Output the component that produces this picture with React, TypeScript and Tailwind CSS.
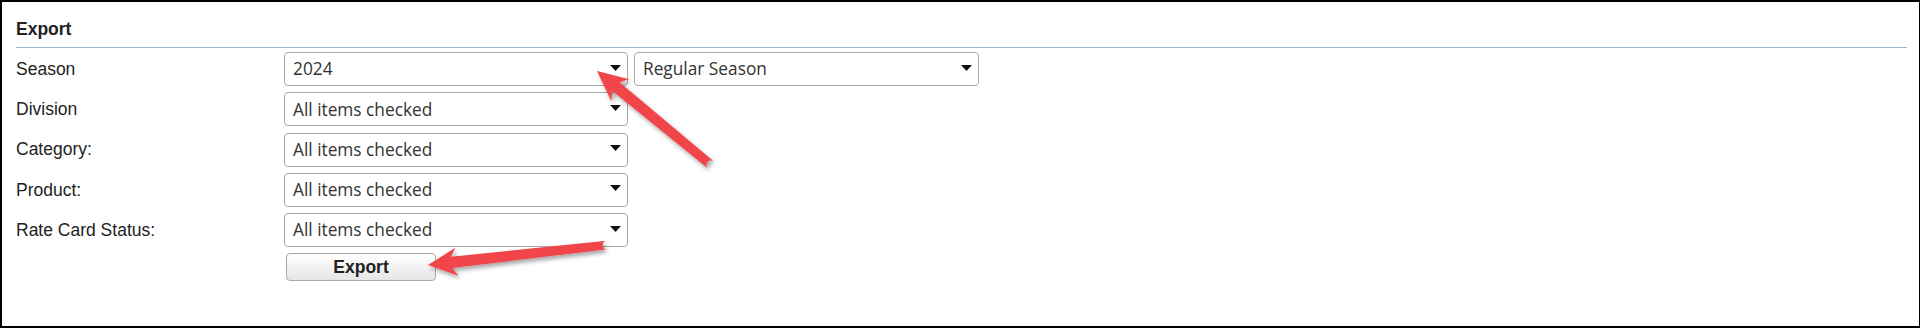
import React from "react";

type Pt = [number, number];

function arrowPath(tip: Pt, tail: Pt, L: number, W: number, sHead: number, sTail: number) {
  const dx = tail[0] - tip[0];
  const dy = tail[1] - tip[1];
  const len = Math.hypot(dx, dy);
  const u: Pt = [dx / len, dy / len];
  const n: Pt = [-u[1], u[0]];
  const p = (base: Pt, a: number, b: number): string =>
    `${(base[0] + u[0] * a + n[0] * b).toFixed(2)},${(base[1] + u[1] * a + n[1] * b).toFixed(2)}`;
  return [
    `M${p(tip, 0, 0)}`,
    `L${p(tip, L, W)}`,
    `L${p(tip, L * 0.82, sHead)}`,
    `L${p(tail, 0, sTail)}`,
    `A${sTail},${sTail} 0 0 1 ${p(tail, 0, -sTail)}`,
    `L${p(tip, L * 0.82, -sHead)}`,
    `L${p(tip, L, -W)}`,
    "Z",
  ].join(" ");
}

function Caret() {
  return (
    <svg width="11" height="6" viewBox="0 0 11 6" className="shrink-0">
      <path d="M0 0 L11 0 L5.5 6 Z" fill="#111" />
    </svg>
  );
}

function Select({ value, className }: { value: string; className: string }) {
  return (
    <div
      className={`flex h-[34px] items-center justify-between rounded-[4px] border border-[#a9a9a9] bg-white pl-[8px] pr-[6px] ${className}`}
    >
      <span className="text-[17.3px] text-[#333] leading-none" style={{ fontFamily: '"Open Sans", "Noto Sans", sans-serif' }}>
        {value}
      </span>
      <div className="-mt-[3px]">
        <Caret />
      </div>
    </div>
  );
}

const rows: { label: string; value: string; extra?: string }[] = [
  { label: "Season", value: "2024", extra: "Regular Season" },
  { label: "Division", value: "All items checked" },
  { label: "Category:", value: "All items checked" },
  { label: "Product:", value: "All items checked" },
  { label: "Rate Card Status:", value: "All items checked" },
];

export default function App() {
  return (
    <div
      className="relative box-border h-[328px] w-[1920px] overflow-hidden border-t-2 border-l-2 border-r border-b-2 border-black bg-white pl-[14px] pr-[12px] pt-[17px]"
      style={{ fontFamily: '"Liberation Sans", Arial, sans-serif' }}
    >
      <div className="text-[17.5px] font-bold leading-[20px] text-[#222]">Export</div>
      <div className="mt-[8px] h-px w-full bg-[#9fb3d9]" />
      <div className="mt-[4px] grid grid-cols-[268px_1fr] gap-y-[6.25px]">
        {rows.map((r) => (
          <React.Fragment key={r.label}>
            <div className="flex h-[34px] items-center text-[17.5px] text-[#222]">{r.label}</div>
            <div className="flex gap-[6px]">
              <Select value={r.value} className="w-[344px]" />
              {r.extra && <Select value={r.extra} className="w-[345px]" />}
            </div>
          </React.Fragment>
        ))}
        <div />
        <div>
          <button className="ml-[2px] h-[28px] w-[150px] rounded-[4px] border border-[#a9a9a9] bg-gradient-to-b from-white to-[#e6e6e6] text-[17.5px] font-bold text-[#222]">
            Export
          </button>
        </div>
      </div>

      <svg className="pointer-events-none absolute left-[-2px] top-[-2px]" width="1920" height="328">
        <defs>
          <filter id="sh" x="-20%" y="-20%" width="140%" height="140%">
            <feDropShadow dx="2" dy="3" stdDeviation="2" floodColor="#000" floodOpacity="0.35" />
          </filter>
        </defs>
        <path d={arrowPath([597, 71], [711, 165], 30, 14, 5.6, 4.6)} fill="#f0444a" filter="url(#sh)" />
        <path d={arrowPath([428, 265], [607, 245], 29, 14, 5.6, 4.4)} fill="#f0444a" filter="url(#sh)" />
      </svg>
    </div>
  );
}
